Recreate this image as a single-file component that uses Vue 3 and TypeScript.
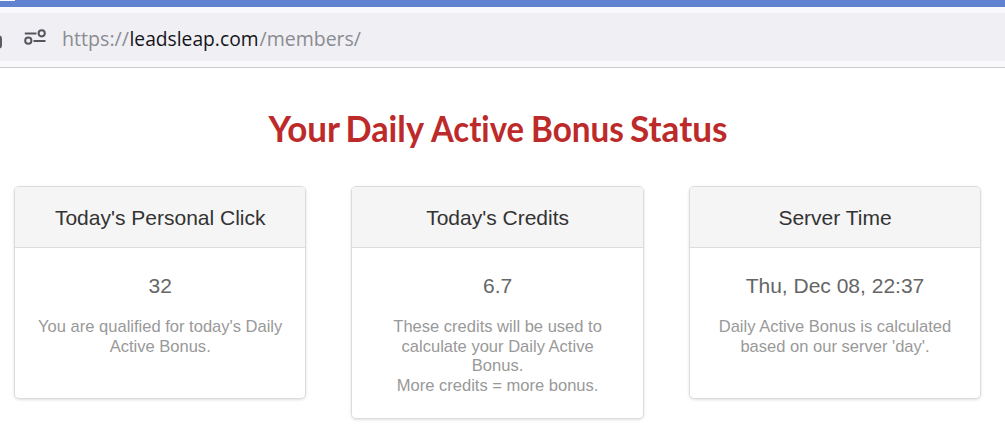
<template>
  <div class="page">
    <div class="tab-strip"><span class="tab-edge"></span></div>
    <div class="toolbar">
      <div class="address-bar">
        <svg class="address" width="400" height="48" viewBox="0 0 400 48">
          <rect x="-8" y="23.5" width="9" height="11" rx="2" fill="none" stroke="#5b5b66" stroke-width="2" />
          <g fill="none" stroke="#55555e" stroke-width="2">
            <path d="M24.8 20.5h11.7M33.5 28h12" />
            <circle cx="41.7" cy="20.3" r="3.1" />
            <circle cx="28.3" cy="27.7" r="3.1" />
          </g>
          <text
            v-for="part in urlParts"
            :key="part.text"
            :class="['url', { host: part.host }]"
            :x="part.x"
            y="33"
            :textLength="part.width"
            lengthAdjust="spacingAndGlyphs"
          >{{ part.text }}</text>
        </svg>
      </div>
    </div>

    <h1 class="title">
      <svg width="480" height="50" viewBox="260 0 480 50">
        <text
          v-for="word in titleWords"
          :key="word.text"
          :x="word.x"
          y="38"
          :textLength="word.width"
          lengthAdjust="spacingAndGlyphs"
        >{{ word.text }}</text>
      </svg>
    </h1>

    <div class="cards">
      <div v-for="card in cards" :key="card.title" class="card">
        <div class="card-header">{{ card.title }}</div>
        <div class="card-body">
          <div class="value">{{ card.value }}</div>
          <div v-for="line in card.lines" :key="line" class="note">{{ line }}</div>
        </div>
      </div>
    </div>
  </div>
</template>

<script setup lang="ts">
interface Card {
  title: string
  value: string
  lines: string[]
}

const urlParts = [
  { text: 'https://', x: 62, width: 67, host: false },
  { text: 'leadsleap.com', x: 129.5, width: 129, host: true },
  { text: '/members/', x: 259.5, width: 101.5, host: false },
]

// Condensed heading, each word fitted to its own width
const titleWords = [
  { text: 'Your', x: 268.5, width: 71.5 },
  { text: 'Daily', x: 345.5, width: 78.5 },
  { text: 'Active', x: 431, width: 93 },
  { text: 'Bonus', x: 531, width: 93 },
  { text: 'Status', x: 630, width: 97.5 },
]

const cards: Card[] = [
  {
    title: "Today's Personal Click",
    value: '32',
    lines: ["You are qualified for today's Daily", 'Active Bonus.'],
  },
  {
    title: "Today's Credits",
    value: '6.7',
    lines: [
      'These credits will be used to',
      'calculate your Daily Active',
      'Bonus.',
      'More credits = more bonus.',
    ],
  },
  {
    title: 'Server Time',
    value: 'Thu, Dec 08, 22:37',
    lines: ['Daily Active Bonus is calculated', "based on our server 'day'."],
  },
]
</script>

<style>
body {
  margin: 0;
  background: #fff;
}
</style>

<style scoped>
.page {
  box-sizing: border-box;
  width: 1005px;
  height: 434px;
  overflow: hidden;
  background: #fff;
  font-family: 'Liberation Sans', Arial, sans-serif;
}

.tab-strip {
  height: 7px;
  background: #6182d0;
}

.tab-edge {
  display: block;
  width: 15px;
  height: 1px;
  background: #f9f9fb;
}

.toolbar {
  box-sizing: border-box;
  height: 61px;
  padding-top: 6px;
  background: #f9f9fb;
  border-bottom: 1px solid #cccccf;
}

.address-bar {
  height: 48px;
  background: #f0f0f4;
}

.address {
  display: block;
}

.url {
  font-family: 'Open Sans', 'Noto Sans', sans-serif;
  font-size: 20.5px;
  fill: #8b8b92;
}

.url.host {
  fill: #15141a;
}

.title {
  display: flex;
  margin: 36px 0 0 260px;
  height: 50px;
}

.title text {
  font-family: Lato, 'Noto Sans', sans-serif;
  font-size: 36.5px;
  font-weight: 700;
  font-variant-ligatures: none;
  fill: #bc2a2a;
}

.cards {
  display: grid;
  grid-template-columns: repeat(3, 292.4px);
  gap: 45px;
  align-items: start;
  padding: 32px 0 0 14px;
}

.card {
  box-sizing: border-box;
  min-height: 213px;
  border: 1px solid #dcdcdc;
  border-radius: 5px;
  box-shadow: 0 1px 3px rgba(0, 0, 0, 0.12);
  text-align: center;
  overflow: hidden;
}

.card-header {
  height: 60px;
  line-height: 62px;
  background: #f5f5f5;
  border-bottom: 1px solid #dcdcdc;
  color: #333;
  font-size: 21px;
}

.card-body {
  padding: 25px 10px 23px;
}

.value {
  margin-bottom: 18px;
  color: #666;
  font-size: 21px;
  line-height: 26px;
}

.note {
  color: #999;
  font-size: 16.55px;
  line-height: 19.6px;
  white-space: nowrap;
}
</style>
